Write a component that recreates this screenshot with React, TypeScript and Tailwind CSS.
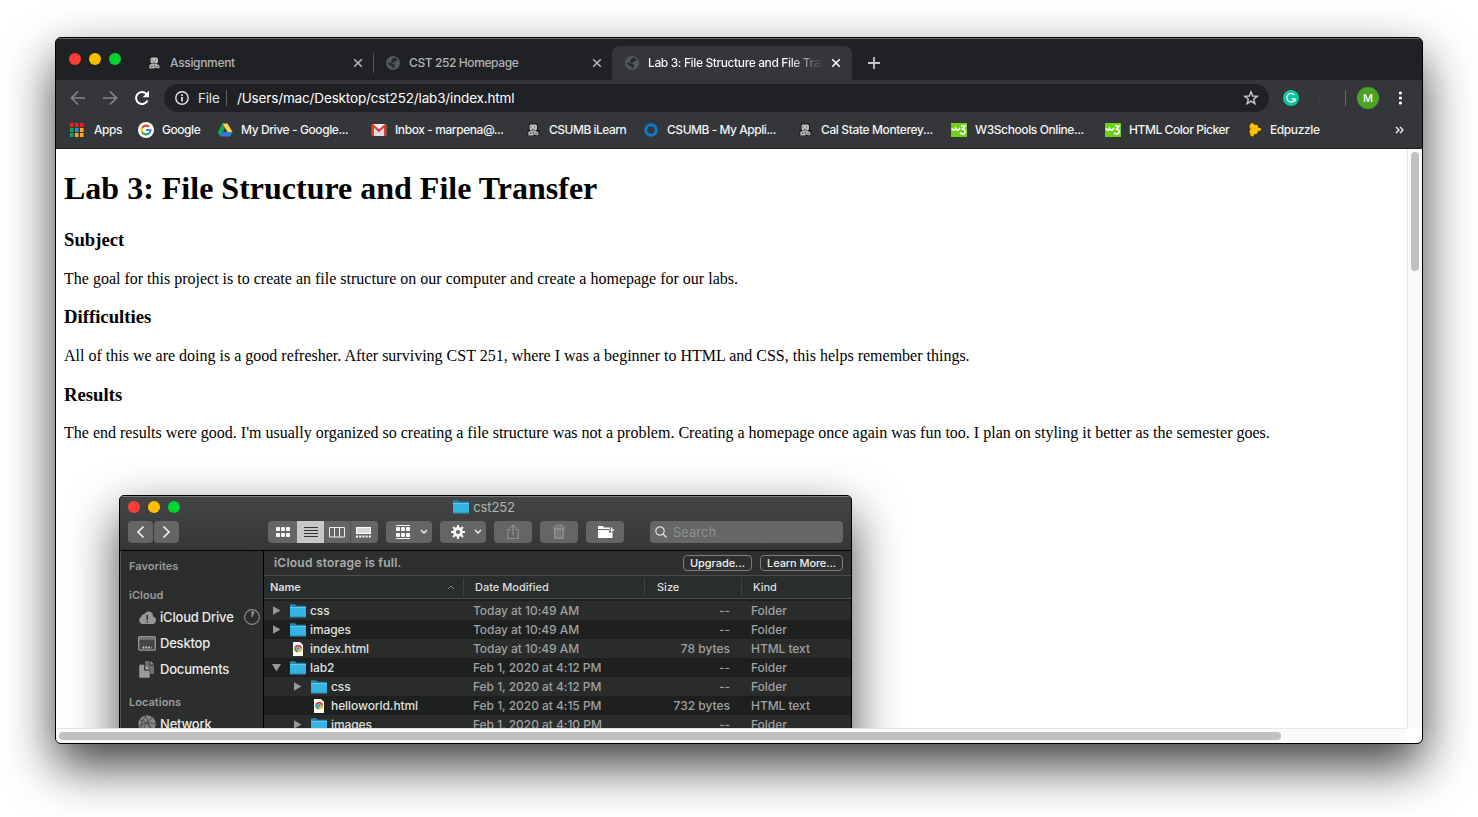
import React from "react";

const Otter = () => (
  <svg width="16" height="16" viewBox="0 0 16 16" className="shrink-0">
    <path d="M4.500 1.500h7l1.500 2v4l1.500 2v4.500H2.500V9l1-1.500v-4z" fill="#1b1a1a" />
    <path d="M4.500 3.500 5.500 2.500h5L12 3.500v3.500l-1 1.500H5.500L4.500 7z" fill="#c4c0bd" />
    <path d="M3.300 10 5 9h6l2.500 1.500v2.800h-2.500L9.500 12.500 8 13.500H3.300z" fill="#b3aeab" />
    <path d="M5.500 4.500h1.200v1H5.500zM9 4.500h1.200v1H9zM6.500 6.800h3v.8h-3zM5 10.800h1.500v.9H5zM8 10h1v1.500H8zM10.500 11h1.500v.8h-1.500z" fill="#4a4644" />
  </svg>
);

const Globe = () => (
  <svg width="14" height="14" viewBox="0 0 14 14" className="shrink-0">
    <circle cx="7" cy="7" r="7" fill="#55585c" />
    <path d="M6.500 2.200 9 1.500l2.500 2-.5 1.500-2 .3-.8 1.500-2.500.2-.7-1zM2 6.500l3 .3 1.500 1.200 2.300.3.200 1.400L8 12 6.500 12.300l-.2-1.800L4 9.500 2.200 8z" fill="#2a2b2f" />
  </svg>
);

const Lights = () => (
  <div className="flex gap-2">
    <span className="size-3 rounded-full bg-[#fd3b37]" />
    <span className="size-3 rounded-full bg-[#ffbd00]" />
    <span className="size-3 rounded-full bg-[#00d52e]" />
  </div>
);

const Close = ({ color }: { color: string }) => (
  <svg width="10" height="10" viewBox="0 0 10 10" className="shrink-0">
    <path d="M1.200 1.200l7.600 7.600M8.800 1.200L1.200 8.800" stroke={color} strokeWidth="1.500" />
  </svg>
);

const W3 = () => (
  <svg width="16" height="14" viewBox="0 0 16 14">
    <rect width="16" height="14" fill="#6fcf1b" />
    <path d="M1 5.200c.5 2.500 2.500 2.500 3.500.3.700 2.200 3 2.200 4.500-.5M10 3h4l-2.300 3c3.300 0 3.300 5-.2 5-1.200 0-2-.6-2.300-1.500" fill="none" stroke="#fff" strokeWidth="1.600" />
  </svg>
);

const AppsIcon = () => (
  <svg width="14" height="14" viewBox="0 0 14 14">
    {["#f21d1d", "#f21d1d", "#f21d1d", "#12a45c", "#2684fc", "#ffa61a", "#12a45c", "#ffa61a", "#ffa61a"].map((c, i) => (
      <rect key={i} x={(i % 3) * 5} y={Math.floor(i / 3) * 5} width="3.500" height="4" fill={c} />
    ))}
  </svg>
);

const GoogleIcon = () => (
  <svg width="16" height="16" viewBox="0 0 16 16">
    <circle cx="8" cy="8" r="8" fill="#fff" />
    <g fill="none" strokeWidth="2.200">
      <path d="M4.200 5.800A4.500 4.500 0 0 1 11.200 4.800" stroke="#ea4335" />
      <path d="M4.200 10.200A4.500 4.500 0 0 1 4.200 5.800" stroke="#fbbc05" />
      <path d="M4.200 10.200A4.500 4.500 0 0 0 11 11.400" stroke="#34a853" />
      <path d="M11 11.400A4.500 4.500 0 0 0 12.500 8H8" stroke="#4285f4" />
    </g>
  </svg>
);

const DriveIcon = () => (
  <svg width="16" height="16" viewBox="0 0 16 16">
    <path d="M5.500 1.500 8 6 3.300 14.500.6 10.200z" fill="#11a861" />
    <path d="M5.500 1.500h5l5 8.500h-5z" fill="#ffcf48" />
    <path d="M5.600 10h9.900l-2.400 4.500H3.300z" fill="#3777e3" />
  </svg>
);

const GmailIcon = () => (
  <svg width="16" height="12" viewBox="0 0 16 12">
    <rect x=".8" width="14.400" height="12" rx="1" fill="#eee" />
    <path d="M3 3.500 8 7.500l5-4V12H3z" fill="#dcdcdc" />
    <path d="M1.900 12V1.300L8 6.800l6.100-5.500V12" fill="none" stroke="#dd3a2c" strokeWidth="2.100" />
  </svg>
);

const RingIcon = () => (
  <svg width="16" height="16" viewBox="0 0 16 16">
    <circle cx="8" cy="8" r="5.300" fill="none" stroke="#0b7bd0" strokeWidth="3" />
  </svg>
);

const EdIcon = () => (
  <svg width="14" height="16" viewBox="0 0 14 16">
    <path d="M1 4.500 2.500 1 5 .6l1.500 2 3-.4 1.200 3.300h2l.8 2-1.500 2-1.700-.3L9.500 12l-3 .5L5 15.400 2 13.500 1 9.500 2 7z" fill="#ffc400" stroke="#33270a" strokeWidth=".8" />
    <path d="M1.500 5c2.500-.5 2.500 3 .8 4zM2 10.500c1.500-.5 2 1.500 1.200 2.500z" fill="#e8890c" />
  </svg>
);

const Bookmark = ({ w, g, t, children, label }: { w: string; g: string; t: string; children: React.ReactNode; label: string }) => (
  <div className={`flex shrink-0 items-center whitespace-nowrap ${w} ${g}`}>
    {children}
    <span className={t}>{label}</span>
  </div>
);

const Folder = () => (
  <svg width="16" height="14" viewBox="0 0 16 14" className="shrink-0">
    <path d="M0 1.500V1q0-.7.7-.7H5L6.500 1.800H15q1 0 1 1V5H0z" fill="#2586ae" />
    <path d="M0 3h16v9.800H0z" fill="#35b3e2" />
    <path d="M0 3h16v1H0z" fill="#5ecbf2" />
    <path d="M0 12h16v1.500H0z" fill="#2c9dcb" />
  </svg>
);

const HtmlFile = () => (
  <svg width="16" height="14" viewBox="0 0 16 14" className="shrink-0">
    <path d="M3 0h7l3 3v11H3z" fill="#fff" />
    <circle cx="8.200" cy="6.500" r="3.800" fill="#e53e30" />
    <path d="M8.200 6.500 4.900 4.600a3.800 3.800 0 0 0 2.500 5.600z" fill="#30a350" />
    <path d="M8.200 6.500H12A3.800 3.800 0 0 1 7.400 10.200z" fill="#fbc619" />
    <circle cx="8.200" cy="6.500" r="1.700" fill="#4285f4" stroke="#fff" strokeWidth=".4" />
  </svg>
);

const Tri = ({ open }: { open: boolean }) => (
  <svg width="9" height="9" viewBox="0 0 9 9" className="shrink-0">
    <path d={open ? "M0 1h9L4.500 8.500z" : "M1 .2v8.600l7.500-4.300z"} fill="#979998" />
  </svg>
);

type Row = { name: string; kind: "folder" | "file"; lvl: number; open?: boolean; date: string; size: string };
const rows: Row[] = [
  { name: "css", kind: "folder", lvl: 0, date: "Today at 10:49 AM", size: "--" },
  { name: "images", kind: "folder", lvl: 0, date: "Today at 10:49 AM", size: "--" },
  { name: "index.html", kind: "file", lvl: 0, date: "Today at 10:49 AM", size: "78 bytes" },
  { name: "lab2", kind: "folder", lvl: 0, open: true, date: "Feb 1, 2020 at 4:12 PM", size: "--" },
  { name: "css", kind: "folder", lvl: 1, date: "Feb 1, 2020 at 4:12 PM", size: "--" },
  { name: "helloworld.html", kind: "file", lvl: 1, date: "Feb 1, 2020 at 4:15 PM", size: "732 bytes" },
  { name: "images", kind: "folder", lvl: 1, date: "Feb 1, 2020 at 4:10 PM", size: "--" },
];

const FileRow = ({ r, i }: { r: Row; i: number }) => (
  <div className={`flex h-[19px] items-center text-[12px] font-[450] whitespace-nowrap text-[#9fa1a0] ${i % 2 ? "bg-[#1e201f]" : "bg-[#2a2c2b]"}`}>
    <div className={`flex w-[209px] items-center ${r.lvl ? "pl-[29px]" : "pl-2"}`}>
      <span className="flex w-[18px]">{r.kind === "folder" && <Tri open={!!r.open} />}</span>
      {r.kind === "folder" ? <Folder /> : <HtmlFile />}
      <span className="ml-1 tracking-[-0.08px] text-[#dfe0df]">{r.name}</span>
    </div>
    <div className="w-[172px] tracking-[-0.04px]">{r.date}</div>
    <div className="w-[85px] text-right">{r.size}</div>
    <div className="pl-[21px] tracking-[-0.05px]">{r.kind === "folder" ? "Folder" : "HTML text"}</div>
  </div>
);

const btn = "flex h-[22px] items-center justify-center rounded-[4px] bg-[#646665]";
const Chev = () => (
  <svg width="8" height="6" viewBox="0 0 8 6"><path d="M1 1l3 3 3-3" fill="none" stroke="#eee" strokeWidth="1.500" /></svg>
);
const dots = (y: number) => [0, 5, 10].map((x) => <rect key={`${x}-${y}`} x={x} y={y} width="4" height="4" rx=".8" fill="#f4f4f4" />);

const Finder = () => (
  <div className="mt-[53px] ml-[55px] h-[440px] w-[733px] overflow-hidden rounded-[5px] border border-black bg-[#2a2c2b] font-['Inter',sans-serif] shadow-[0_20px_50px_rgba(0,0,0,0.7)]">
    <div className="h-[55px] border-t border-b border-t-[#7a7b7b] border-b-black bg-linear-to-b from-[#434544] to-[#363837]">
      <div className="grid h-[20px] grid-cols-[1fr_auto_1fr] items-center pl-2">
        <Lights />
        <div className="flex items-center gap-1 pr-[11px] text-[13px] tracking-[-0.1px] text-[#b1b2b2]"><Folder />cst252</div>
      </div>
      <div className="mt-[4px] flex items-center pl-2">
        <div className={`w-[25px] ${btn}`}><svg width="9" height="14" viewBox="0 0 9 14"><path d="M7.500 1.500 2 7l5.500 5.500" fill="none" stroke="#eee" strokeWidth="1.700" /></svg></div>
        <div className={`ml-px w-[25px] ${btn}`}><svg width="9" height="14" viewBox="0 0 9 14"><path d="M1.500 1.500 7 7l-5.500 5.500" fill="none" stroke="#eee" strokeWidth="1.700" /></svg></div>
        <div className="ml-[89px] flex h-[22px] w-[110px] overflow-hidden rounded-[4px] bg-[#646665]">
          <div className="flex w-[29px] items-center justify-center"><svg width="14" height="10">{dots(0)}{dots(6)}</svg></div>
          <div className="flex w-[27px] items-center justify-center bg-[#c6c8c7]"><svg width="14" height="11"><path d="M0 .5h14M0 3.500h14M0 6.500h14M0 9.500h14" stroke="#333" /></svg></div>
          <div className="flex w-[27px] items-center justify-center border-r border-[#505251]"><svg width="16" height="11"><path d="M.5.5h15v9.500H.5zM5.500.5V10M10.500.5V10" fill="none" stroke="#eee" /></svg></div>
          <div className="flex w-[27px] items-center justify-center pr-[2px]"><svg width="15" height="11"><rect x=".5" y=".5" width="14" height="6" fill="#d7d8d8" stroke="#fff" /><path d="M0 9.500h15" stroke="#fff" strokeWidth="2" strokeDasharray="2 1.200" /></svg></div>
        </div>
        <div className={`ml-2 w-[46px] gap-[10px] pl-[6px] ${btn}`}><svg width="14" height="14"><path d="M0 .5h14M0 13.500h14" stroke="#eee" />{dots(2)}{dots(8)}</svg><Chev /></div>
        <div className={`ml-2 w-[46px] gap-[9px] pl-[6px] ${btn}`}>
          <svg width="14" height="14" viewBox="0 0 14 14"><circle cx="7" cy="7" r="3.600" fill="none" stroke="#f4f4f4" strokeWidth="2.800" /><path d="M7 0v14M0 7h14M2 2l10 10M12 2L2 12" stroke="#f4f4f4" strokeWidth="2" /><circle cx="7" cy="7" r="2.100" fill="#646665" /></svg><Chev />
        </div>
        <div className={`ml-2 w-[38px] ${btn}`}><svg width="12" height="16" viewBox="0 0 12 16"><path d="M4 5.500H.8v9h10.400v-9H8M6 11V1M3.300 3.700 6 1l2.700 2.700" fill="none" stroke="#8b8d8c" strokeWidth="1.200" /></svg></div>
        <div className={`ml-2 w-[38px] ${btn}`}><svg width="14" height="16" viewBox="0 0 14 16"><path d="M.5 3h13M4.500 2.500V1h5v1.500" fill="none" stroke="#8b8d8c" strokeWidth="1.200" /><path d="M1.500 4h11l-.8 11H2.300z" fill="#8b8d8c" /><path d="M4.500 6l.3 7M7 6v7M9.500 6l-.3 7" stroke="#5c5e5d" /></svg></div>
        <div className={`ml-2 w-[38px] pl-[2px] ${btn}`}><svg width="18" height="14" viewBox="0 0 18 14"><path d="M1 1h5l1 1.500h6V4H1zM1 5h11v2.500h3.500V13H1z" fill="#fff" /><path d="M14.800 2.500v5M12.300 5h5" stroke="#fff" strokeWidth="1.200" /></svg></div>
        <div className="ml-[26px] flex h-[22px] w-[193px] items-center gap-[6px] rounded-[4px] bg-[#656766] pl-[5px] text-[13px] text-[#8f9190]">
          <svg width="12" height="12" viewBox="0 0 12 12"><circle cx="5" cy="5" r="4.200" fill="none" stroke="#dcdcdc" strokeWidth="1.200" /><path d="m8 8 3.500 3.500" stroke="#dcdcdc" strokeWidth="1.400" /></svg>
          Search
        </div>
      </div>
    </div>
    <div className="flex h-[384px]">
      <div className="w-[144px] shrink-0 border-r border-l border-r-black border-l-[#555756] bg-[#2c2e2d] text-[13px] font-medium tracking-[-0.2px] whitespace-nowrap text-[#e9eae9]">
        <div className="mt-[6px] h-[18px] pl-2 text-[11px] leading-[18px] font-semibold tracking-[0.05px] text-[#9a9c9b]">Favorites</div>
        <div className="mt-[11px] h-[18px] pl-2 text-[11px] leading-[18px] font-semibold tracking-[0.05px] text-[#9a9c9b]">iCloud</div>
        <div className="flex h-[26px] items-center pl-[17px]">
          <svg width="18" height="13" viewBox="0 0 18 13"><path d="M4 13a4 4 0 0 1-.6-7.400A3 3 0 0 1 6.500 3 4.500 4.500 0 0 1 15 5.500 3.800 3.800 0 0 1 14 13z" fill="#969897" /><path d="M9.200 4v5M9.200 10v1.500" stroke="#2c2e2d" strokeWidth="1.400" /></svg>
          <span className="ml-1 w-[84px]">iCloud Drive</span>
          <svg width="16" height="16" viewBox="0 0 16 16" className="shrink-0"><circle cx="8" cy="8" r="7.400" fill="none" stroke="#8d8f8e" strokeWidth="1.100" /><path d="M8 8V2.500L10 3z" fill="#8d8f8e" stroke="#8d8f8e" /></svg>
        </div>
        <div className="flex h-[26px] items-center gap-1 pl-[17px]">
          <svg width="18" height="15" viewBox="0 0 18 15"><rect x=".7" y=".7" width="16.600" height="13.400" rx="1.200" fill="#444645" stroke="#999b9a" strokeWidth="1.300" /><path d="M1 2.500h16" stroke="#777978" strokeWidth="2.500" /><path d="M4.500 11.500h9" stroke="#c5c7c6" strokeWidth="1.800" strokeDasharray="1.800 1" /></svg>
          Desktop
        </div>
        <div className="flex h-[26px] items-center gap-1 pl-[17px]">
          <svg width="18" height="17" viewBox="0 0 18 17"><path d="M7 0h4.500v4.500H16V13H7z" fill="#707271" /><path d="M12.500 0 16 3.500h-3.500z" fill="#999b9a" /><path d="M1 3.500h5.500V9.500H12V17H1z" fill="#999b9a" stroke="#2c2e2d" strokeWidth=".5" /><path d="M7.300 3.500 12 8.500H7.300z" fill="#b5b7b6" stroke="#2c2e2d" strokeWidth=".5" /></svg>
          Documents
        </div>
        <div className="mt-[11px] h-[18px] pl-2 text-[11px] leading-[18px] font-semibold tracking-[0.02px] text-[#9a9c9b]">Locations</div>
        <div className="flex h-[26px] items-center gap-1 pl-[17px]">
          <svg width="18" height="18" viewBox="0 0 18 18"><circle cx="9" cy="9" r="8.700" fill="#858786" /><g fill="none" stroke="#444645" strokeWidth=".9"><path d="M2 5q7 1 12 9M5 16Q7 7 14 3M1 11q8-5 16-2M7 1q5 6 4 16M3 14Q3 6 8 1" /></g></svg>
          Network
        </div>
      </div>
      <div className="min-w-0 flex-1">
        <div className="flex h-[25px] items-center border-b border-[#4b4d4c] bg-[#2e302f] pr-[8px] pl-[10px] text-[12px] font-semibold text-[#a9abaa]">
          <span className="flex-1 tracking-[0.23px]">iCloud storage is full.</span>
          <span className="flex h-4 w-[69px] items-center justify-center rounded-[4px] border border-[#7d7f7e] text-[11px] font-medium tracking-[-0.05px] text-[#eeefee]">Upgrade...</span>
          <span className="ml-2 flex h-4 w-[83px] items-center justify-center rounded-[4px] border border-[#7d7f7e] text-[11px] font-medium tracking-[-0.1px] text-[#eeefee]">Learn More...</span>
        </div>
        <div className="flex h-[23px] items-center border-b border-[#4b4d4c] bg-[#2a2d2e] text-[11px] font-medium text-[#dedfdf]">
          <div className="flex h-[18px] w-[200px] items-center justify-between border-r border-[#3f4243] pr-2 pl-[6px] font-semibold"><span className="tracking-[-0.1px]">Name</span><svg width="8" height="5"><path d="M1 4l3-3 3 3" fill="none" stroke="#8b8d8d" /></svg></div>
          <div className="flex h-[18px] w-[181px] items-center border-r border-[#3f4243] pl-[11px]">Date Modified</div>
          <div className="flex h-[18px] w-[97px] items-center border-r border-[#3f4243] pl-3">Size</div>
          <div className="pl-[11px]">Kind</div>
        </div>
        <div className="h-[2px] bg-[#1e201f]" />
        {rows.map((r, i) => <FileRow key={i} r={r} i={i} />)}
      </div>
    </div>
  </div>
);

export default function App() {
  return (
    <div className="h-[817px] w-[1478px] overflow-hidden bg-white pt-[37px] pl-[55px]">
      <div className="flex h-[707px] w-[1368px] flex-col overflow-hidden rounded-[6px] border border-black bg-[#35363a] font-['Inter',sans-serif] shadow-[0_22px_50px_rgba(0,0,0,0.75)]">
        <div className="flex h-[42px] shrink-0 items-center border-t border-[#6a6b6e] bg-[#202124] pl-[13px] text-[12px] font-[450] whitespace-nowrap text-[#b0b3b6]">
          <div className="-mt-[1px]"><Lights /></div>
          <div className="mt-[7px] ml-[25px] flex h-5 w-[228px] items-center border-r border-[#505256] pr-[10px]">
            <Otter /><span className="ml-2 flex-1 tracking-[-0.33px]">Assignment</span><Close color="#b5b8bb" />
          </div>
          <div className="mt-[7px] ml-3 flex h-5 w-[226px] items-center pr-[10px]">
            <Globe /><span className="ml-[9px] flex-1 tracking-[-0.4px]">CST 252 Homepage</span><Close color="#b5b8bb" />
          </div>
          <div className="mt-[7px] flex h-[34px] w-[240px] items-center rounded-t-[8px] bg-[#35363a] pr-[11px] pl-[13px]">
            <Globe />
            <span className="ml-[9px] w-[175px] overflow-hidden bg-linear-to-r from-white from-80% to-transparent bg-clip-text tracking-[-0.38px] text-transparent">Lab 3: File Structure and File Transfer</span>
            <span className="ml-2 flex"><Close color="#fff" /></span>
          </div>
          <svg width="12" height="12" className="mt-[7px] ml-4"><path d="M6 0v12M0 6h12" stroke="#c4c7ca" strokeWidth="1.800" /></svg>
        </div>
        <div className="flex h-9 shrink-0 items-center text-[#dfe1e3]">
          <svg width="16" height="16" viewBox="0 0 16 16" className="ml-[14px]"><path d="M15 8H2M8 1.500 1.500 8 8 14.500" fill="none" stroke="#85878b" strokeWidth="1.700" /></svg>
          <svg width="16" height="16" viewBox="0 0 16 16" className="ml-4"><path d="M1 8h13M8 1.500 14.500 8 8 14.500" fill="none" stroke="#85878b" strokeWidth="1.700" /></svg>
          <svg width="16" height="16" viewBox="0 0 16 16" className="ml-4"><path d="M13.500 10.500A6 6 0 1 1 12.500 4" fill="none" stroke="#fff" strokeWidth="2" /><path d="M15 .8v6.400H8.600z" fill="#fff" /></svg>
          <div className="ml-[14px] flex h-7 w-[1105px] items-center rounded-full bg-[#202124] pl-[11px] text-[13.500px] whitespace-nowrap">
            <svg width="14" height="14" viewBox="0 0 14 14"><circle cx="7" cy="7" r="6.200" fill="none" stroke="#e4e6e8" strokeWidth="1.400" /><path d="M7 6v4.500M7 3.300v1.600" stroke="#e4e6e8" strokeWidth="1.700" /></svg>
            <span className="ml-[9px] w-[28px] tracking-[-0.2px]">File</span>
            <span className="mr-[10px] h-4 w-px bg-[#606266]" />
            <span className="flex-1 tracking-[-0.15px] text-white">/Users/mac/Desktop/cst252/lab3/index.html</span>
            <svg width="16" height="16" viewBox="0 0 16 16" className="mr-[10px]"><path d="m8 1.800 1.700 4.200 4.500.3-3.500 2.900 1.200 4.500L8 11.200l-3.900 2.500 1.200-4.500-3.500-2.900 4.500-.3z" fill="none" stroke="#c8cacd" strokeWidth="1.400" /></svg>
          </div>
          <svg width="16" height="16" viewBox="0 0 16 16" className="ml-[14px]"><circle cx="8" cy="8" r="8" fill="#0cc79d" /><path d="M11.500 5A4.300 4.300 0 1 0 12 9.500M8.700 8.800H12v2.800" fill="none" stroke="#fff" strokeWidth="1.200" /></svg>
          <span className="ml-[18px] w-[28px] font-['Liberation_Serif',serif] text-[15px] text-[#3d3e41] italic">f?</span>
          <span className="h-4 w-px bg-[#66686c]" />
          <span className="ml-[11px] flex size-[22px] items-center justify-center rounded-full bg-[#4da324] text-[11px] font-medium text-white">M</span>
          <svg width="4" height="14" className="ml-[20px]"><circle cx="1.500" cy="2" r="1.600" fill="#fff" /><circle cx="1.500" cy="7" r="1.600" fill="#fff" /><circle cx="1.500" cy="12" r="1.600" fill="#fff" /></svg>
        </div>
        <div className="flex h-[33px] shrink-0 items-center border-b border-[#1d1e20] pb-1 pl-[14px] text-[12px] font-[450] text-[#f2f3f4]">
          <Bookmark w="w-[68px]" g="gap-[10px]" t="tracking-[-0.45px]" label="Apps"><AppsIcon /></Bookmark>
          <Bookmark w="w-[79px]" g="gap-2" t="tracking-[-0.45px]" label="Google"><GoogleIcon /></Bookmark>
          <Bookmark w="w-[154px]" g="gap-2" t="tracking-[-0.4px]" label="My Drive - Google..."><DriveIcon /></Bookmark>
          <Bookmark w="w-[154px]" g="gap-2" t="tracking-[-0.42px]" label="Inbox - marpena@..."><GmailIcon /></Bookmark>
          <Bookmark w="w-[118px]" g="gap-2" t="tracking-[-0.5px]" label="CSUMB iLearn"><Otter /></Bookmark>
          <Bookmark w="w-[154px]" g="gap-2" t="tracking-[-0.46px]" label="CSUMB - My Appli..."><RingIcon /></Bookmark>
          <Bookmark w="w-[154px]" g="gap-2" t="tracking-[-0.38px]" label="Cal State Monterey..."><Otter /></Bookmark>
          <Bookmark w="w-[154px]" g="gap-2" t="tracking-[-0.4px]" label="W3Schools Online..."><W3 /></Bookmark>
          <Bookmark w="w-[143px]" g="gap-2" t="tracking-[-0.43px]" label="HTML Color Picker"><W3 /></Bookmark>
          <Bookmark w="w-[147px]" g="gap-2" t="tracking-[-0.4px]" label="Edpuzzle"><EdIcon /></Bookmark>
          <svg width="9" height="8"><path d="M1 1l3 3-3 3M5 1l3 3-3 3" fill="none" stroke="#eee" strokeWidth="1.400" /></svg>
        </div>
        <div className="flex min-h-0 flex-1 bg-white">
          <div className="flex w-[1351px] flex-col">
            <div className="h-[579px] overflow-hidden px-2 pt-[21px] font-['Liberation_Serif',serif] text-[16px] leading-[18px] whitespace-nowrap text-black">
              <h1 className="text-[32px] leading-[37px] font-bold">Lab 3: File Structure and File Transfer</h1>
              <h3 className="mt-[22px] text-[18.720px] leading-[22px] font-bold">Subject</h3>
              <p className="mt-[18.700px]">The goal for this project is to create an file structure on our computer and create a homepage for our labs.</p>
              <h3 className="mt-[18.700px] text-[18.720px] leading-[22px] font-bold">Difficulties</h3>
              <p className="mt-[18.700px]">All of this we are doing is a good refresher. After surviving CST 251, where I was a beginner to HTML and CSS, this helps remember things.</p>
              <h3 className="mt-[18.700px] text-[18.720px] leading-[22px] font-bold">Results</h3>
              <p className="mt-[18.700px]">The end results were good. I'm usually organized so creating a file structure was not a problem. Creating a homepage once again was fun too. I plan on styling it better as the semester goes.</p>
              <Finder />
            </div>
            <div className="flex h-[15px] items-center border-t border-[#e6e6e6] bg-[#fafafa] pl-[3px]">
              <div className="h-2 w-[1222px] rounded-full bg-[#c1c1c1]" />
            </div>
          </div>
          <div className="h-[579px] w-[15px] border-l border-[#e6e6e6] bg-[#fafafa] pt-[3px] pl-[3px]">
            <div className="h-[119px] w-2 rounded-full bg-[#c1c1c1]" />
          </div>
        </div>
      </div>
    </div>
  );
}
